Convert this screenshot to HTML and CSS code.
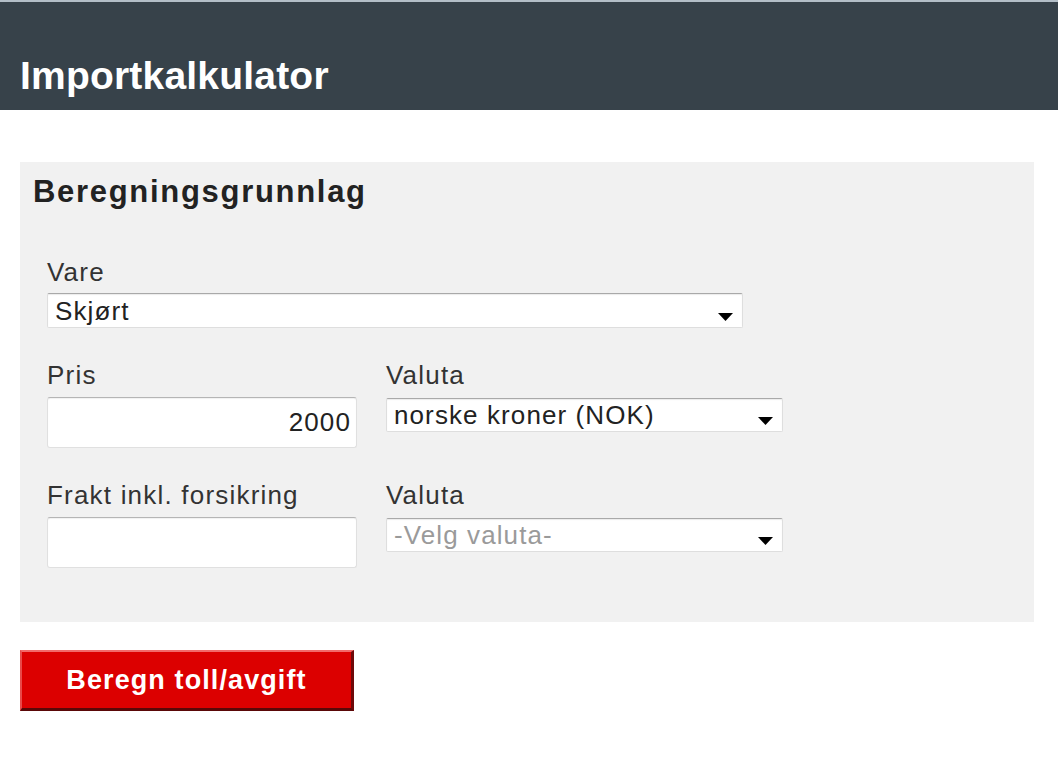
FILE: index.html
```html
<!DOCTYPE html>
<html lang="no">
<head>
<meta charset="utf-8">
<title>Importkalkulator</title>
<link rel="stylesheet" href="styles.css">
</head>
<body>
<header class="topbar">
  <h1 class="title">Importkalkulator</h1>
</header>
<main class="page">
  <section class="panel">
    <h2 class="panel-title">Beregningsgrunnlag</h2>
    <div class="fields">
      <div class="field">
        <label class="label" for="vare">Vare</label>
        <div class="select select-wide">
          <select id="vare" class="control-select"><option>Skjørt</option></select>
          <svg class="arrow" width="15" height="8" viewBox="0 0 15 8"><polygon points="0,0 15,0 7.5,8" fill="#000"/></svg>
        </div>
      </div>
      <div class="row">
        <div class="field">
          <label class="label" for="pris">Pris</label>
          <input id="pris" class="text-input align-right" type="text" value="2000">
        </div>
        <div class="field">
          <label class="label" for="valuta1">Valuta</label>
          <div class="select select-mid">
            <select id="valuta1" class="control-select"><option>norske kroner (NOK)</option></select>
            <svg class="arrow" width="15" height="8" viewBox="0 0 15 8"><polygon points="0,0 15,0 7.5,8" fill="#000"/></svg>
          </div>
        </div>
      </div>
      <div class="row">
        <div class="field">
          <label class="label" for="frakt">Frakt inkl. forsikring</label>
          <input id="frakt" class="text-input" type="text" value="">
        </div>
        <div class="field">
          <label class="label" for="valuta2">Valuta</label>
          <div class="select select-mid">
            <select id="valuta2" class="control-select placeholder"><option>-Velg valuta-</option></select>
            <svg class="arrow" width="15" height="8" viewBox="0 0 15 8"><polygon points="0,0 15,0 7.5,8" fill="#000"/></svg>
          </div>
        </div>
      </div>
    </div>
  </section>
  <button class="calc-button" type="button">Beregn toll/avgift</button>
</main>
</body>
</html>
```
FILE: styles.css
```css
* { box-sizing: border-box; }

html, body {
  margin: 0;
  padding: 0;
  background: #ffffff;
  font-family: "Liberation Sans", Arial, sans-serif;
}

.topbar {
  background: #37424a;
  border-top: 2px solid #b3bec7;
  height: 110px;
  padding: 51px 0 0 20px;
}

.title {
  margin: 0;
  color: #ffffff;
  font-size: 39px;
  line-height: 45px;
  font-weight: bold;
  letter-spacing: 0.2px;
}

.page {
  padding: 52px 24px 0 20px;
  display: flex;
  flex-direction: column;
  align-items: flex-start;
}

.panel {
  width: 1014px;
  background: #f1f1f1;
  padding: 12px 13px 54px 13px;
}

.panel-title {
  margin: 0;
  font-size: 31px;
  line-height: 36px;
  font-weight: bold;
  color: #222;
  letter-spacing: 1.7px;
}

.fields {
  display: flex;
  flex-direction: column;
  gap: 32px;
  padding: 47px 0 0 14px;
}

.row {
  display: flex;
  gap: 29px;
}

.field {
  display: flex;
  flex-direction: column;
  align-items: flex-start;
}

.label {
  font-size: 26px;
  line-height: 30px;
  color: #333;
  letter-spacing: 1.2px;
}

.select {
  position: relative;
  margin-top: 8px;
}

.field:first-child > .select-wide { margin-top: 6px; }

.select-wide { width: 696px; }
.select-mid { width: 397px; }

.control-select {
  appearance: none;
  -webkit-appearance: none;
  width: 100%;
  height: 34px;
  margin: 0;
  padding: 0 30px 0 7px;
  font-family: "Liberation Sans", Arial, sans-serif;
  font-size: 26px;
  letter-spacing: 1.1px;
  color: #222;
  background: #ffffff;
  border: 1px solid #dedede;
  border-top-color: #a9a9a9;
  border-radius: 2px;
  box-shadow: inset 0 1px 1px rgba(0,0,0,0.08);
  outline: none;
}

.select-wide .control-select { height: 35px; }

.control-select.placeholder { color: #9a9a9a; }

.arrow {
  position: absolute;
  right: 10px;
  bottom: 7px;
}

.text-input {
  width: 310px;
  height: 51px;
  margin: 7px 0 0 0;
  padding: 0 5px 0 7px;
  font-family: "Liberation Sans", Arial, sans-serif;
  font-size: 26px;
  letter-spacing: 1.1px;
  color: #222;
  background: #ffffff;
  border: 1px solid #e0e0e0;
  border-top-color: #b5b5b5;
  border-radius: 3px;
  box-shadow: inset 0 1px 1px rgba(0,0,0,0.06);
  outline: none;
}

.align-right { text-align: right; }

.calc-button {
  margin-top: 28px;
  width: 334px;
  height: 61px;
  padding: 0;
  background: #dc0000;
  color: #ffffff;
  font-family: "Liberation Sans", Arial, sans-serif;
  font-size: 27px;
  font-weight: bold;
  letter-spacing: 1.1px;
  border-style: solid;
  border-width: 2px 3px 3px 2px;
  border-color: #f26a6a #6e0a0a #5a0808 #e84a4a;
  border-radius: 0;
  cursor: pointer;
}
```
